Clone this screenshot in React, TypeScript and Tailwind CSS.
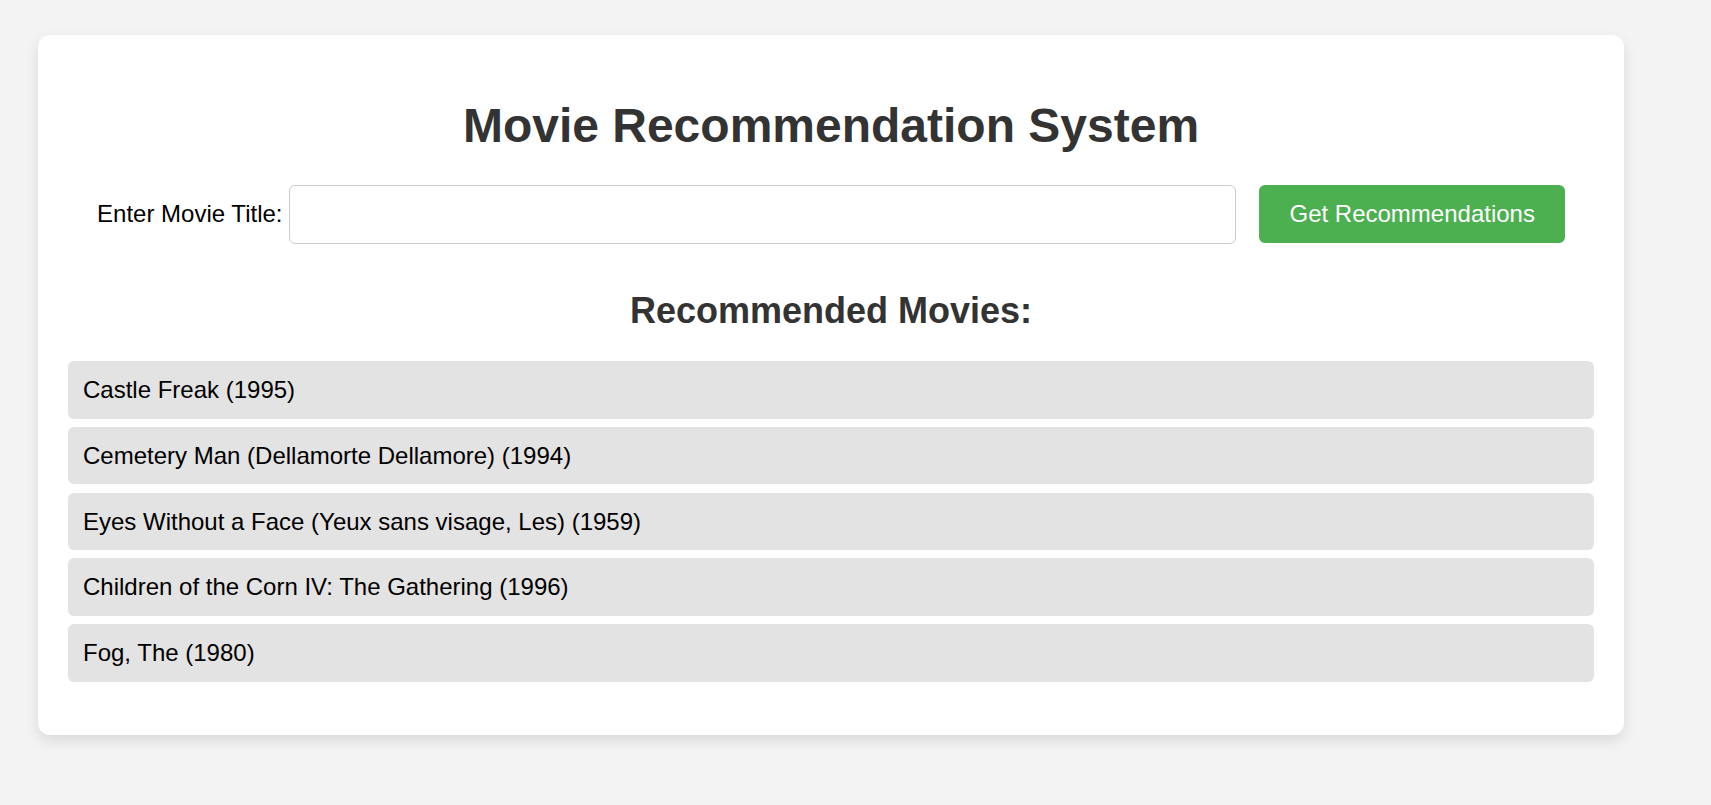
const movies = [
  "Castle Freak (1995)",
  "Cemetery Man (Dellamorte Dellamore) (1994)",
  "Eyes Without a Face (Yeux sans visage, Les) (1959)",
  "Children of the Corn IV: The Gathering (1996)",
  "Fog, The (1980)",
]

export default function App() {
  return (
    <div className="min-h-screen w-full bg-[#f3f3f3] pt-[35px] pb-[70px] font-['Liberation_Sans',Arial,sans-serif]">
      <div className="ml-[38px] w-[1586px] rounded-[12px] bg-white px-[30px] pt-[30px] pb-[53px] shadow-[0_6px_14px_rgba(0,0,0,0.1)]">
        <h1 className="mt-[32.5px] mb-[32px] text-center text-[48px] font-bold leading-[55px] text-[#333]">
          Movie Recommendation System
        </h1>

        <div className="flex items-center justify-center">
          <label className="text-[24px] leading-[27.6px] text-black">Enter Movie Title:</label>
          <input
            type="text"
            className="ml-[6.7px] h-[59px] w-[947px] rounded-[6px] border border-[#ccc] bg-white px-[15px] text-[24px] outline-none"
          />
          <button className="ml-[23.3px] h-[57.5px] rounded-[6px] bg-[#4caf50] px-[30px] text-[24px] leading-[27.6px] text-white">
            Get Recommendations
          </button>
        </div>

        <h2 className="mt-[46px] mb-[30px] text-center text-[36px] font-bold leading-[41.5px] text-[#333]">
          Recommended Movies:
        </h2>

        <ul>
          {movies.map((m) => (
            <li
              key={m}
              className="mb-[8.2px] rounded-[6px] bg-[#e3e3e3] px-[15px] py-[15px] text-[24px] leading-[27.6px] text-black last:mb-0"
            >
              {m}
            </li>
          ))}
        </ul>
      </div>
    </div>
  )
}
